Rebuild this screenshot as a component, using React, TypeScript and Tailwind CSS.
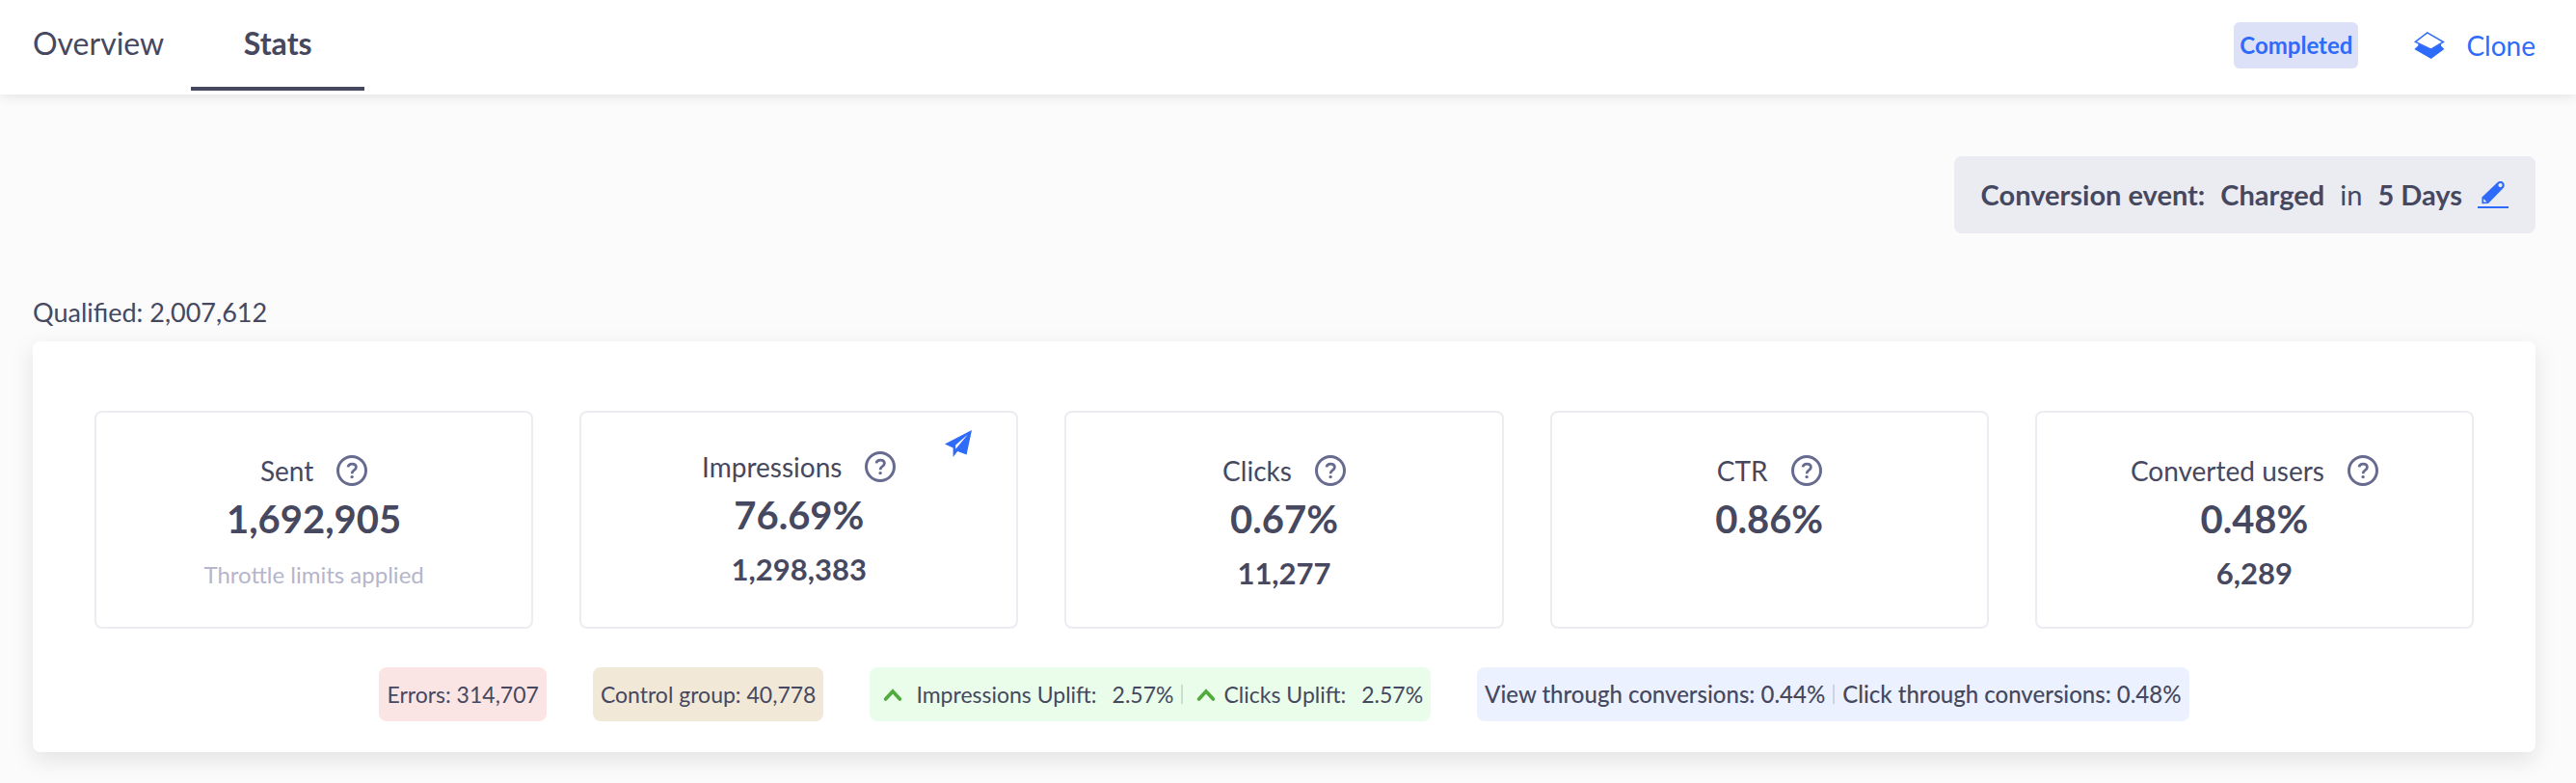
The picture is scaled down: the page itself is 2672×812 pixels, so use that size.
import React, { useState } from "react";

type Stat = {
  label: string;
  value: string;
  count?: string;
  note?: string;
  bestTime?: boolean;
};

const STATS: Stat[] = [
  { label: "Sent", value: "1,692,905", note: "Throttle limits applied" },
  { label: "Impressions", value: "76.69%", count: "1,298,383", bestTime: true },
  { label: "Clicks", value: "0.67%", count: "11,277" },
  { label: "CTR", value: "0.86%" },
  { label: "Converted users", value: "0.48%", count: "6,289" },
];

const HelpIcon = () => (
  <svg viewBox="0 0 32 32" className="w-8 h-8" fill="none" stroke="#666B8F" aria-hidden="true">
    <circle cx="16" cy="16" r="14.5" strokeWidth="3" />
    <path
      d="M12 12.4C12.3 10.3 13.9 9.1 16.2 9.1C18.7 9.1 20.4 10.4 20.4 12.5C20.4 14.3 19.2 15.1 18 15.9C16.7 16.7 16.1 17.3 16.1 19.2"
      strokeWidth="2.8"
    />
    <circle cx="16.1" cy="22.6" r="1.7" fill="#666B8F" stroke="none" />
  </svg>
);

const CloneIcon = () => (
  <svg viewBox="0 0 32 28" className="w-8 h-7" aria-hidden="true">
    <path d="M.3 18L4.4 14.2V12.2L17.6 18.4L28 12.2V14.6L31.3 18L17.7 28Z" fill="#2F6BFA" />
    <path d="M13.7 .9L30.4 10.5L17.6 18.2L1.4 10.4Z" fill="#fff" stroke="#2F6BFA" strokeWidth="1.5" />
  </svg>
);

const PencilIcon = () => (
  <svg viewBox="0 0 32 28" className="w-8 h-7" aria-hidden="true">
    <path d="M4.4 23.2V16.6L20.4 1.3A4.1 4.1 0 0 1 26.6 7L11 22.9Z" fill="#2F6BFA" />
    <circle cx="23.5" cy="4.1" r="2.1" fill="#EBECF2" />
    <path d="M6.2 18.2L9.6 21.4H6.2Z" fill="#EBECF2" />
    <path d="M0 26h32v2H0z" fill="#2F6BFA" />
  </svg>
);

const PlaneIcon = () => (
  <svg viewBox="0 0 28 28" className="w-7 h-7" aria-hidden="true">
    <path d="M28 0L0 14.6L8.6 18.4V28L13.2 21.9L22.6 25.6Z" fill="#2F6BFA" />
    <path d="M24 4.4L11.2 15.4V19.8Z" fill="#fff" />
  </svg>
);

const UpIcon = () => (
  <svg viewBox="0 0 20 14" className="w-5 h-[14px]" fill="none" aria-hidden="true">
    <path d="M2.6 12L10 4L17.4 12" stroke="#50AA3C" strokeWidth="3.6" strokeLinecap="round" />
  </svg>
);

const StatTile: React.FC<{ stat: Stat }> = ({ stat }) => (
  <div
    className={`relative flex flex-col items-center h-[226px] border-2 border-[#ECECF2] rounded-lg ${
      stat.bestTime ? "pt-10" : "pt-11"
    }`}
  >
    <div className="flex items-center gap-6 h-8">
      <span className="text-[28px] leading-8">{stat.label}</span>
      <button type="button" aria-label={`About ${stat.label}`}>
        <HelpIcon />
      </button>
    </div>
    <div className="mt-2.5 text-[40px] leading-12 font-bold">{stat.value}</div>
    {stat.count && <div className="mt-3 text-[31px] leading-10 font-bold">{stat.count}</div>}
    {stat.note && <div className="mt-3.5 text-2xl leading-10 text-[#B5B5CC]">{stat.note}</div>}
    {stat.bestTime && (
      <button type="button" aria-label="Delivery details" className="absolute top-[18px] right-[46px]">
        <PlaneIcon />
      </button>
    )}
  </div>
);

const App: React.FC = () => {
  const [tab, setTab] = useState("Stats");

  return (
    <div className="min-h-screen bg-[#FBFBFB] text-[#464860] font-['Lato','Open_Sans',sans-serif]">
      {/* Tabs and campaign actions */}
      <header className="flex items-center justify-between h-[98px] pl-[34px] pr-[42px] pb-1 bg-white shadow-[0_2px_12px_rgba(0,0,0,0.1)]">
        <nav className="flex self-stretch gap-7">
          {["Overview", "Stats"].map((name) => (
            <button
              key={name}
              type="button"
              onClick={() => setTab(name)}
              className={`h-full text-[32px] leading-10 border-b-4 ${
                tab === name ? "w-[180px] border-[#464860] font-bold" : "border-transparent"
              }`}
            >
              {name}
            </button>
          ))}
        </nav>
        <div className="flex items-center">
          <span className="flex items-center h-12 px-1.5 rounded-md bg-[#DDE1F8] text-[#2F6BFA] text-2xl font-bold">
            Completed
          </span>
          <button type="button" className="ml-[58px] flex items-center gap-[22px] text-[28px] text-[#2F6BFA]">
            <CloneIcon />
            Clone
          </button>
        </div>
      </header>

      <main className="pl-[34px] pr-[42px] pt-16 pb-8">
        <div className="flex justify-end">
          <div className="flex items-center h-20 px-7 rounded-lg bg-[#EBECF2] text-[29px] font-bold">
            <span>Conversion event:</span>
            <span className="ml-4">Charged</span>
            <span className="ml-4 font-normal">in</span>
            <span className="ml-4">5 Days</span>
            <button type="button" aria-label="Edit conversion event" className="ml-4">
              <PencilIcon />
            </button>
          </div>
        </div>

        <div className="mt-16 text-[27px] leading-9">Qualified: 2,007,612</div>

        <section className="mt-3 px-16 pt-[72px] pb-8 rounded-lg bg-white shadow-[0_8px_24px_rgba(0,0,0,0.1)]">
          <div className="grid grid-cols-5 gap-12">
            {STATS.map((stat) => (
              <StatTile key={stat.label} stat={stat} />
            ))}
          </div>

          {/* Breakdown chips */}
          <div className="mt-10 flex justify-center gap-12 text-[23px]">
            <div className="flex items-center h-14 px-2 rounded-lg bg-[#FBE5E4]">Errors: 314,707</div>
            <div className="flex items-center h-14 px-2 rounded-lg bg-[#F1E8D8]">Control group: 40,778</div>
            <div className="flex items-center h-14 pl-3.5 pr-2 rounded-lg bg-[#EAFDEA]">
              <UpIcon />
              <span className="ml-3.5">Impressions Uplift:</span>
              <span className="ml-4">2.57%</span>
              <span className="mx-2 w-0.5 h-5 bg-[#CBDDCF]" />
              <span className="ml-1.5">
                <UpIcon />
              </span>
              <span className="ml-2">Clicks Uplift:</span>
              <span className="ml-4">2.57%</span>
            </div>
            <div className="flex items-center h-14 px-2 rounded-lg bg-[#EBF1FE] text-2xl font-medium">
              <span>View through conversions: 0.44%</span>
              <span className="mx-2 w-0.5 h-5 bg-[#CDD3E2]" />
              <span>Click through conversions: 0.48%</span>
            </div>
          </div>
        </section>
      </main>
    </div>
  );
};

export default App;
